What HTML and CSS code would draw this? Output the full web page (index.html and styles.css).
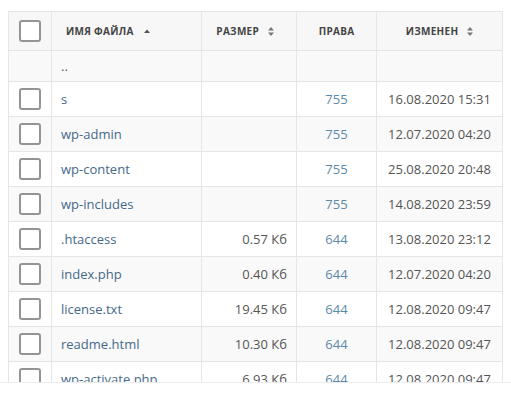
FILE: index.html
```html
<!DOCTYPE html>
<html lang="ru">
<head>
<meta charset="utf-8">
<link rel="stylesheet" href="styles.css">
</head>
<body>
<div class="viewport">
<table class="files">
  <colgroup>
    <col class="c-check"><col class="c-name"><col class="c-size"><col class="c-perm"><col class="c-date">
  </colgroup>
  <thead>
    <tr>
      <th class="check"><span class="box"></span></th>
      <th class="name">Имя файла <svg class="sort asc" width="6" height="4" viewBox="0 0 6 4"><path d="M0 4 L3 0.5 L6 4 Z" fill="#555"/></svg></th>
      <th class="size">Размер <svg class="sort" width="6" height="9" viewBox="0 0 6 9"><path d="M0 3.6 L3 0 L6 3.6 Z M0 5.4 L3 9 L6 5.4 Z" fill="#777"/></svg></th>
      <th class="perm">Права</th>
      <th class="date">Изменен <svg class="sort" width="6" height="9" viewBox="0 0 6 9"><path d="M0 3.6 L3 0 L6 3.6 Z M0 5.4 L3 9 L6 5.4 Z" fill="#777"/></svg></th>
    </tr>
  </thead>
  <tbody>
    <tr class="up"><td></td><td class="name"><a>..</a></td><td></td><td></td><td></td></tr>
    <tr><td class="check"><span class="box"></span></td><td class="name"><a>s</a></td><td class="size"></td><td class="perm"><a>755</a></td><td class="date">16.08.2020 15:31</td></tr>
    <tr><td class="check"><span class="box"></span></td><td class="name"><a>wp-admin</a></td><td class="size"></td><td class="perm"><a>755</a></td><td class="date">12.07.2020 04:20</td></tr>
    <tr><td class="check"><span class="box"></span></td><td class="name"><a>wp-content</a></td><td class="size"></td><td class="perm"><a>755</a></td><td class="date">25.08.2020 20:48</td></tr>
    <tr><td class="check"><span class="box"></span></td><td class="name"><a>wp-includes</a></td><td class="size"></td><td class="perm"><a>755</a></td><td class="date">14.08.2020 23:59</td></tr>
    <tr><td class="check"><span class="box"></span></td><td class="name"><a>.htaccess</a></td><td class="size">0.57 Кб</td><td class="perm"><a>644</a></td><td class="date">13.08.2020 23:12</td></tr>
    <tr><td class="check"><span class="box"></span></td><td class="name"><a>index.php</a></td><td class="size">0.40 Кб</td><td class="perm"><a>644</a></td><td class="date">12.07.2020 04:20</td></tr>
    <tr><td class="check"><span class="box"></span></td><td class="name"><a>license.txt</a></td><td class="size">19.45 Кб</td><td class="perm"><a>644</a></td><td class="date">12.08.2020 09:47</td></tr>
    <tr><td class="check"><span class="box"></span></td><td class="name"><a>readme.html</a></td><td class="size">10.30 Кб</td><td class="perm"><a>644</a></td><td class="date">12.08.2020 09:47</td></tr>
    <tr><td class="check"><span class="box"></span></td><td class="name"><a>wp-activate.php</a></td><td class="size">6.93 Кб</td><td class="perm"><a>644</a></td><td class="date">12.08.2020 09:47</td></tr>
  </tbody>
</table>
</div>
</body>
</html>
```

FILE: styles.css
```css
html, body {
  margin: 0;
  padding: 0;
  background: #fff;
}
body {
  font-family: "Open Sans", "Liberation Sans", sans-serif;
  font-size: 13px;
  color: #555;
}
.viewport {
  height: 383px;
  overflow: hidden;
  padding: 11px 0 0 8px;
  box-sizing: border-box;
  border-bottom: 1px solid #ececec;
}
.files {
  border-collapse: collapse;
  table-layout: fixed;
  width: 494px;
}
.c-check { width: 43px; }
.c-name { width: 150px; }
.c-size { width: 95px; }
.c-perm { width: 80px; }
.c-date { width: 126px; }

.files th, .files td {
  border: 1px solid #e6e6e6;
  padding: 0 9px;
  white-space: nowrap;
  overflow: hidden;
}
.files th {
  height: 38px;
  background: #f7f7f7;
  font-size: 10px;
  font-weight: 700;
  text-transform: uppercase;
  color: #444;
  letter-spacing: 0.3px;
}
.files td {
  height: 34px;
}
.files tbody tr:nth-child(odd) td {
  background: #f9f9f9;
}
.files tr.up td {
  height: 30px;
}
.files .check {
  padding: 0;
  text-align: center;
}
.box {
  display: inline-block;
  width: 18px;
  height: 18px;
  border: 2px solid #949494;
  border-radius: 3px;
  vertical-align: middle;
  background: #fff;
}
th.name {
  text-align: left;
  padding-left: 14px;
}
th.size {
  text-align: right;
  padding-right: 22px;
}
th.perm, th.date {
  text-align: center;
}
.sort {
  margin-left: 6px;
  vertical-align: middle;
  position: relative;
  top: -1px;
}
.sort.asc {
  margin-left: 7px;
}
td.name {
  text-align: left;
}
td.name a {
  color: #46698a;
}
td.size {
  text-align: right;
}
td.perm {
  text-align: center;
}
td.perm a {
  color: #5d89a8;
}
td.date {
  text-align: center;
}
a {
  text-decoration: none;
}
```
